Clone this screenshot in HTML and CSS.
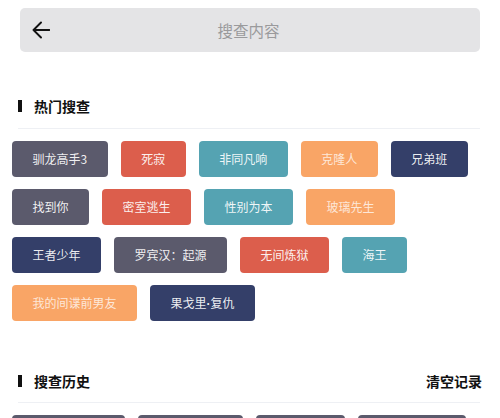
FILE: index.html
```html
<!DOCTYPE html>
<html lang="zh-CN">
<head>
  <meta charset="UTF-8">
  <title>搜查</title>
  <link rel="stylesheet" href="styles.css">
</head>
<body>

<div class="search-bar">
  <svg class="back" width="18" height="18" viewBox="0 0 18 18">
    <path d="M1.5 9 H17.5 M9 1.5 L1.5 9 L9 16.5" fill="none" stroke="#111" stroke-width="1.9" stroke-linecap="round" stroke-linejoin="round"/>
  </svg>
  <div class="placeholder">搜查内容</div>
</div>

<div class="section hot">
  <div class="section-title">
    <span class="mark"></span>
    <span class="title">热门搜查</span>
  </div>
  <div class="tags">
    <span class="tag gray">驯龙高手3</span>
    <span class="tag red">死寂</span>
    <span class="tag teal">非同凡响</span>
    <span class="tag orange">克隆人</span>
    <span class="tag navy">兄弟班</span>
    <span class="tag gray">找到你</span>
    <span class="tag red">密室逃生</span>
    <span class="tag teal">性别为本</span>
    <span class="tag orange">玻璃先生</span>
    <span class="tag navy">王者少年</span>
    <span class="tag gray">罗宾汉：起源</span>
    <span class="tag red">无间炼狱</span>
    <span class="tag teal">海王</span>
    <span class="tag orange">我的间谍前男友</span>
    <span class="tag navy">果戈里<span class="dot">·</span>复仇</span>
  </div>
</div>

<div class="section history">
  <div class="section-title">
    <span class="mark"></span>
    <span class="title">搜查历史</span>
    <span class="clear">清空记录</span>
  </div>
  <div class="tags">
    <span class="tag gray">罗宾汉：起源</span>
    <span class="tag gray">果戈里<span class="dot">·</span>复仇</span>
    <span class="tag gray">无间炼狱</span>
    <span class="tag gray">驯龙高手3：</span>
  </div>
</div>

</body>
</html>
```

FILE: styles.css
```css
body {
  margin: 0;
  font-family: "Noto Sans CJK SC", "Noto Sans", sans-serif;
  background: #fff;
  color: #111;
  overflow: hidden;
}

.search-bar {
  margin: 8px 20px 0;
  height: 44px;
  background: #e4e4e6;
  border-radius: 5px;
  display: flex;
  align-items: center;
  position: relative;
}

.back {
  position: absolute;
  left: 12px;
  top: 13px;
}

.placeholder {
  flex: 1;
  text-align: center;
  font-size: 15.5px;
  color: #9a9a9c;
  padding-right: 3px;
  line-height: 44px;
}

.section-title {
  margin: 0 20px 0 18px;
  height: 20px;
  padding-bottom: 12px;
  border-bottom: 1px solid #eef0f4;
  display: flex;
  align-items: center;
}

.hot .section-title {
  margin-top: 44px;
}

.history .section-title {
  margin-top: 50px;
  padding-bottom: 11px;
}

.mark {
  width: 4px;
  height: 12px;
  background: #111;
  margin-right: 12px;
}

.title {
  font-size: 14px;
  font-weight: bold;
  line-height: 20px;
}

.clear {
  margin-left: auto;
  margin-right: -2px;
  font-size: 14px;
  font-weight: bold;
  line-height: 20px;
}

.tags {
  display: flex;
  flex-wrap: wrap;
  gap: 12px 13px;
  padding: 0 12px;
  margin-top: 12px;
}

.tag {
  height: 36px;
  line-height: 36px;
  padding: 0 20.5px;
  font-size: 12px;
  color: rgba(255, 255, 255, 0.92);
  border-radius: 4px;
  white-space: nowrap;
}

.dot {
  font-family: "Liberation Sans", sans-serif;
  font-weight: bold;
}

.gray { background: #5b5a6c; }
.red { background: #dc5e4c; }
.teal { background: #55a3b2; }
.orange { background: #f9a566; color: rgba(255, 255, 255, 0.75); }
.navy { background: #343f69; }
```
